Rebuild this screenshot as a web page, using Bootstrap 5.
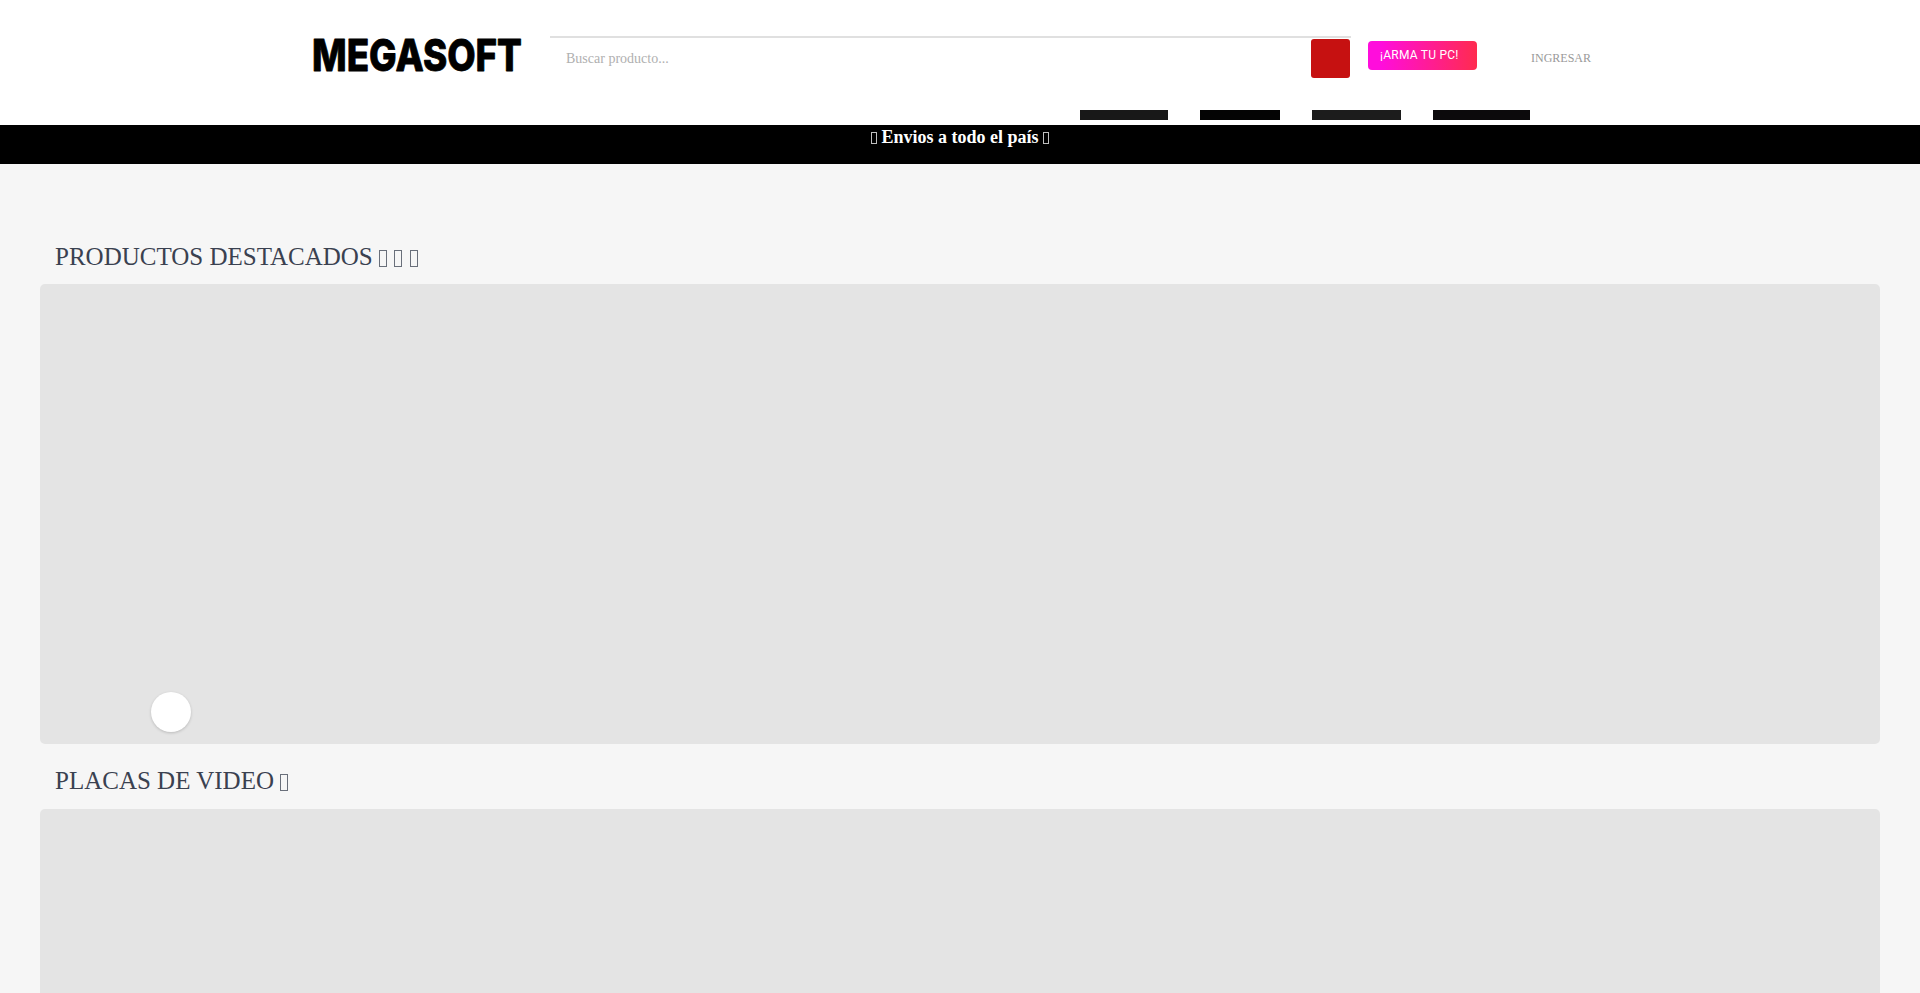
<!DOCTYPE html>
<html lang="es">
<head>
<meta charset="utf-8">
<title>Megasoft</title>
<link href="https://cdn.jsdelivr.net/npm/bootstrap@5.3.0/dist/css/bootstrap.min.css" rel="stylesheet">
<style>
body{background:#f6f6f6;font-family:"Liberation Serif",serif;overflow-x:hidden}
.hdr{height:125px;padding:36px 0 0 312px}
.logo-box{width:210px;height:36px;margin-top:2px;margin-right:28px}
.logo-box svg{display:block;overflow:visible}
.logo-txt{font-family:Inter,sans-serif;font-weight:800;font-size:43.5px;fill:#000;stroke:#000;stroke-width:.8px;stroke-linejoin:round}
.srch{width:801px;border-top:2px solid #e0e0e0;height:42px}
.srch input{border:0;outline:0;background:transparent;height:39px;margin-top:1px;padding:0 16px;font:14px "Liberation Serif",serif;min-width:0}
.srch input::placeholder{color:#b0b0b0;opacity:1}
.go-btn{width:39px;height:39px;margin:1px 1px 0 0;background:#c61111;border:0;border-radius:3px}
.arma{width:109px;height:29px;margin:5px 0 0 17px;border-radius:4px;background:linear-gradient(90deg,#ff0ddc 12%,#ff2b4f 100%);color:#fff;font:400 12px/28px Roboto,sans-serif;padding-left:12px;letter-spacing:.25px;text-decoration:none;display:block}
.ingresar{margin:1px 0 0 54px;font-size:12px;line-height:42px;color:#999;text-decoration:none}
.nav-bars{margin:31px 0 0 768px;gap:32px}
.nav-bars a{display:block;height:10px}
.w1{width:88px;background:#181818}.w2{width:80px;background:#040404}.w3{width:89px;background:#1c1c1c}.w4{width:97px;background:#0c0a0c}
.envios{background:#000;color:#fff;height:39px;font-size:18px;font-weight:700;line-height:24px;text-align:center}
.tofu{display:inline-block;border:1px solid currentColor;opacity:.75}
.envios .tofu{width:6px;height:12px;vertical-align:-1px;font-weight:400}
.main-wrap{padding:68px 40px 0}
.sec-title{font-size:25px;font-weight:400;color:#3a4150;margin:0;padding:8px 15px 0;line-height:34px;height:52px}
.sec-title .tofu{width:8px;height:17px;vertical-align:-2px;margin-right:1px}
.second-title{height:65px;padding-top:20px}
.placeholder-card{height:460px;background:#e4e4e4;border-radius:5px;position:relative}
.dot{position:absolute;left:111px;bottom:12px;width:40px;height:40px;border-radius:50%;background:#fff;box-shadow:0 1px 3px rgba(0,0,0,.18)}
</style>
</head>
<body>
<header class="bg-white hdr">
  <div class="d-flex align-items-start">
    <a class="logo-box d-block" href="#" aria-label="Megasoft">
      <svg width="210" height="36" viewBox="0 0 210 36"><text class="logo-txt" x="0" y="33.3" textLength="210" lengthAdjust="spacingAndGlyphs">MEGASOFT</text></svg>
    </a>
    <form class="srch d-flex" onsubmit="return false">
      <input class="flex-grow-1" type="text" placeholder="Buscar producto...">
      <button class="go-btn" type="submit" aria-label="Buscar"></button>
    </form>
    <a class="arma" href="#">¡ARMA TU PC!</a>
    <a class="ingresar" href="#">INGRESAR</a>
  </div>
  <nav class="d-flex nav-bars">
    <a class="w1" href="#"></a><a class="w2" href="#"></a><a class="w3" href="#"></a><a class="w4" href="#"></a>
  </nav>
</header>
<div class="envios"><span class="tofu"></span> Envios a todo el país <span class="tofu"></span></div>
<main class="main-wrap">
  <h2 class="sec-title">PRODUCTOS DESTACADOS <span class="tofu"></span> <span class="tofu"></span> <span class="tofu"></span></h2>
  <div class="placeholder-card"><div class="dot"></div></div>
  <h2 class="sec-title second-title">PLACAS DE VIDEO <span class="tofu"></span></h2>
  <div class="placeholder-card"></div>
</main>
<script src="https://cdn.jsdelivr.net/npm/bootstrap@5.3.0/dist/js/bootstrap.bundle.min.js"></script>
</body>
</html>
